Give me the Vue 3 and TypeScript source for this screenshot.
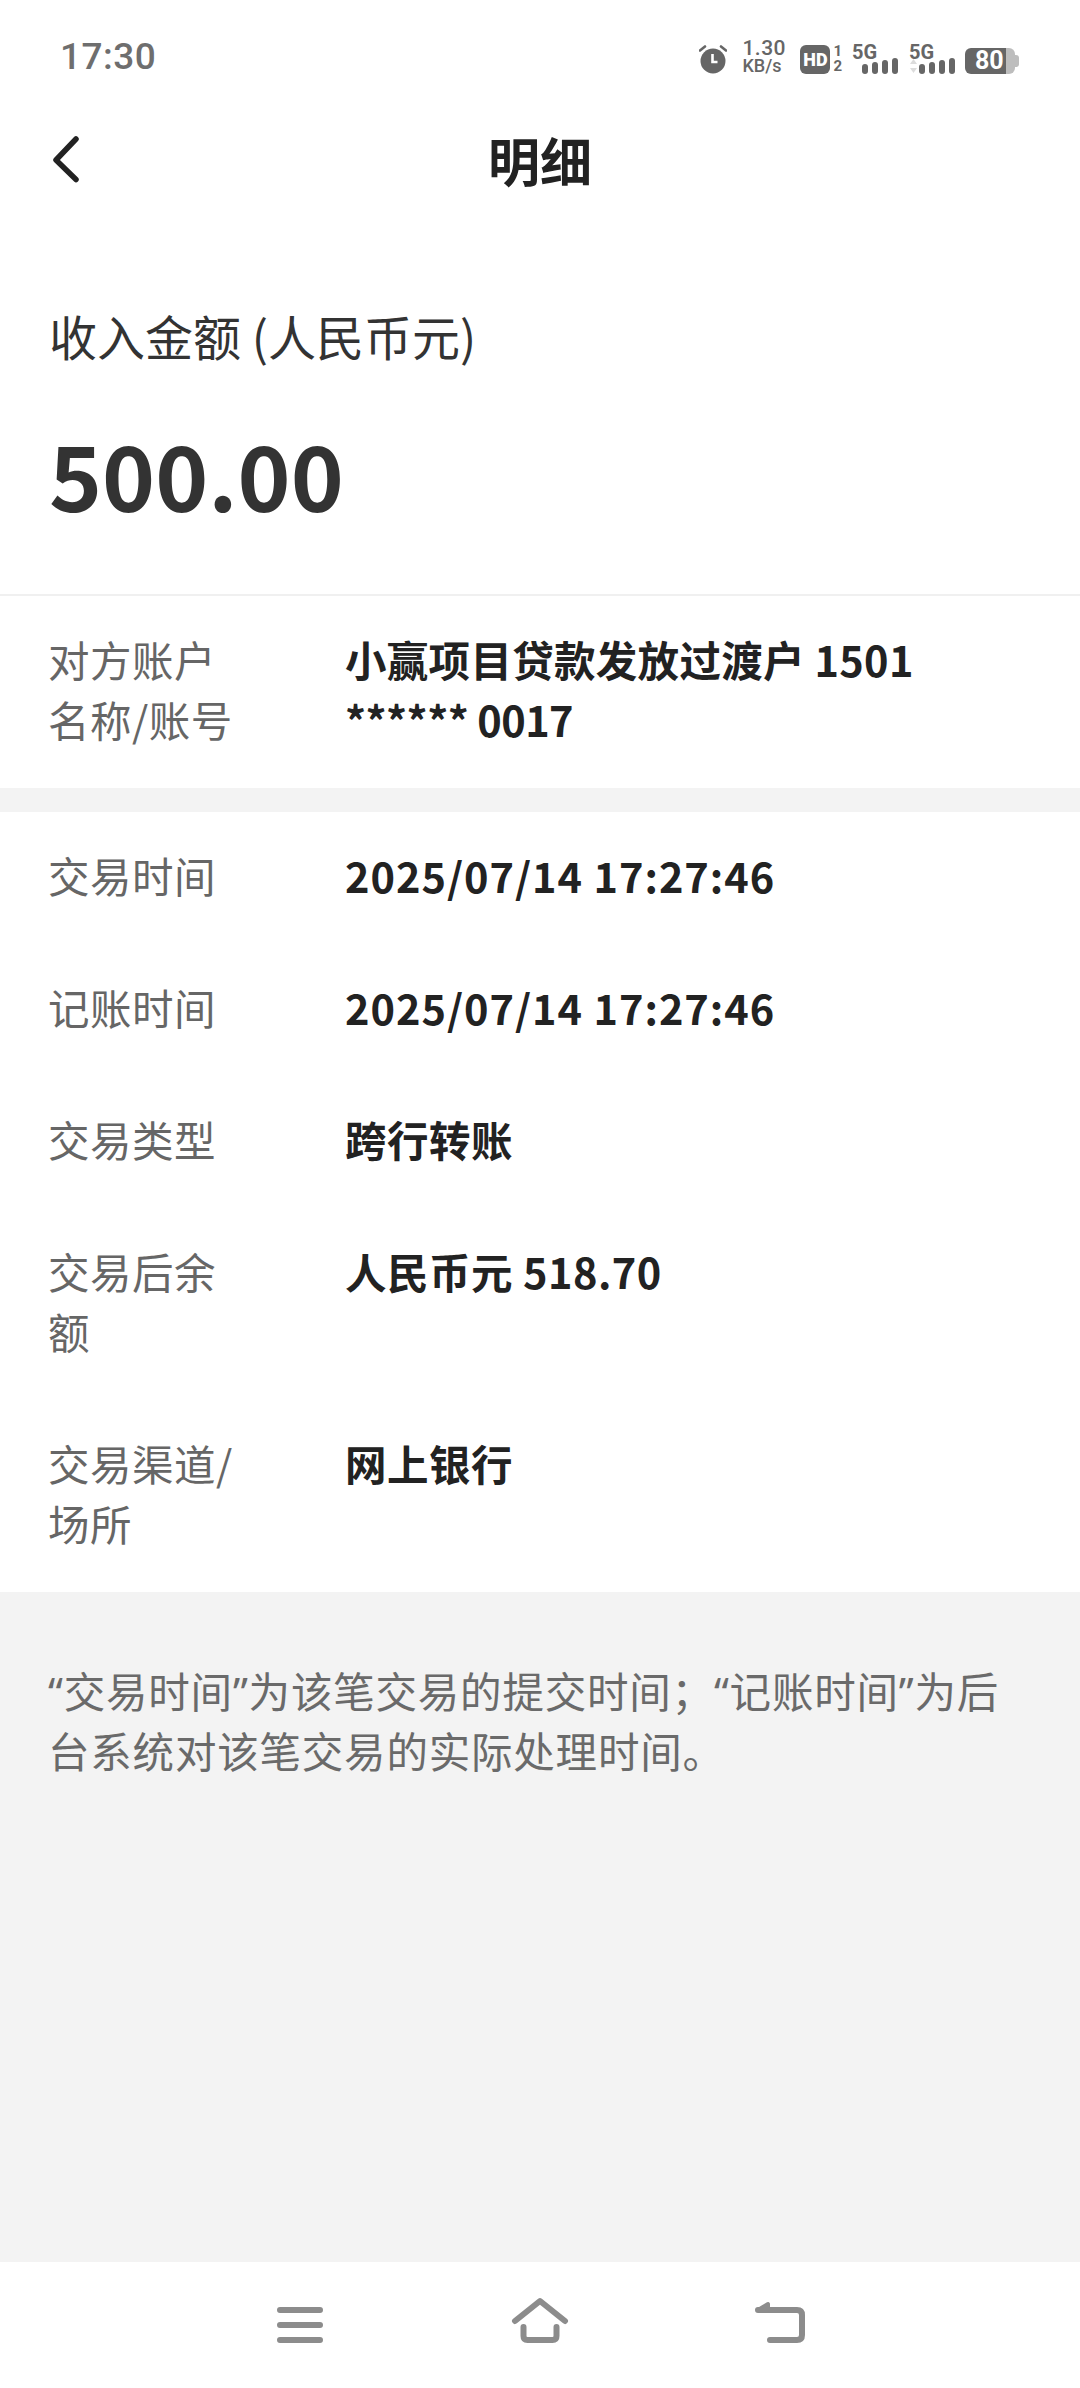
<script setup lang="ts">
const rows: { label: string; value: string; digits?: boolean }[] = [
  { label: '交易时间', value: '2025/07/14 17:27:46', digits: true },
  { label: '记账时间', value: '2025/07/14 17:27:46', digits: true },
  { label: '交易类型', value: '跨行转账' },
  { label: '交易后余额', value: '人民币元 518.70' },
  { label: '交易渠道/场所', value: '网上银行' },
]
const bars = [0, 1, 2, 3]
</script>

<template>
  <div class="page">
    <div class="status-bar">
      <span class="clock">17:30</span>
      <div class="status-icons">
        <svg class="ic-alarm" width="28" height="30" viewBox="0 0 28 30">
          <circle cx="14" cy="17" r="12.5" fill="#666" />
          <path d="M13.500 10v8h5" fill="none" stroke="#fff" stroke-width="2.600" />
          <path d="M1 6.500 6 2.500M27 6.500 22 2.500" stroke="#666" stroke-width="2.600" stroke-linecap="round" />
        </svg>
        <div class="speed">
          <span class="speed-num">1.30</span>
          <span class="speed-unit">KB/s</span>
        </div>
        <div class="hd">
          <span class="hd-box">HD</span>
          <span class="hd-sims"><span>1</span><span>2</span></span>
        </div>
        <div class="signal">
          <span class="net">5G</span>
          <div class="bars">
            <i v-for="b in bars" :key="b" :style="{ height: 10 + b * 2 + 'px' }"></i>
          </div>
        </div>
        <div class="signal signal-data">
          <span class="net">5G</span>
          <svg class="updown" width="7" height="15" viewBox="0 0 7 15">
            <path d="M3.500 0 7 5H0Z" fill="#dcdcdc" />
            <path d="M0 9h7l-3.500 5Z" fill="#dcdcdc" />
          </svg>
          <div class="bars">
            <i v-for="b in bars" :key="b" :style="{ height: 10 + b * 2 + 'px' }"></i>
          </div>
        </div>
        <div class="battery">
          <span class="battery-body">80</span>
          <i class="battery-nub"></i>
        </div>
      </div>
    </div>

    <header class="topbar">
      <svg class="back" width="30" height="50" viewBox="0 0 30 50">
        <path d="M23 4 3 25l20 19.500" fill="none" stroke="#222" stroke-width="5.500" stroke-linecap="round" stroke-linejoin="round" />
      </svg>
      <h1 class="title">明细</h1>
    </header>

    <section class="amount">
      <div class="amount-label">收入金额 (人民币元)</div>
      <div class="amount-num">500.00</div>
    </section>

    <section class="block block-account">
      <div class="row">
        <div class="row-label">对方账户<br />名称/账号</div>
        <div class="row-value row-account">小赢项目贷款发放过渡户 1501<br /><span class="masked">****** 0017</span></div>
      </div>
    </section>

    <section class="block">
      <div v-for="r in rows" :key="r.label" class="row">
        <div class="row-label">{{ r.label }}</div>
        <div class="row-value" :class="{ 'row-digits': r.digits }">{{ r.value }}</div>
      </div>
    </section>

    <div class="note">
      “交易时间”为该笔交易的提交时间；“记账时间”为后台系统对该笔交易的实际处理时间。
    </div>

    <nav class="navbar">
      <div class="nav-cell">
        <svg width="60" height="60" viewBox="0 0 60 60" fill="none" stroke="#8c8c8c" stroke-width="6" stroke-linecap="round">
          <path d="M10 15h40M10 30h40M10 45h40" />
        </svg>
      </div>
      <div class="nav-cell">
        <svg width="60" height="60" viewBox="0 0 60 60" fill="none" stroke="#8c8c8c" stroke-width="6" stroke-linecap="round" stroke-linejoin="round">
          <path d="M5 26 30 6l25 20" />
          <path d="M13.500 32v9q0 4 4 4h25q4 0 4-4v-9" />
        </svg>
      </div>
      <div class="nav-cell">
        <svg width="60" height="60" viewBox="0 0 60 60" fill="none" stroke="#8c8c8c" stroke-width="6" stroke-linecap="round" stroke-linejoin="round">
          <path d="M8 15h39q5 0 5 5v20q0 5-5 5H20" />
          <path d="M8 15 18 9v6Z" fill="#8c8c8c" stroke-width="4" />
        </svg>
      </div>
    </nav>
  </div>
</template>

<style>
html,
body {
  margin: 0;
  background: #fff;
}
</style>

<style scoped>
.page {
  width: 1080px;
  height: 2388px;
  display: flex;
  flex-direction: column;
  background: #fff;
  font-family: "Noto Sans CJK SC", "Noto Sans", sans-serif;
  color: #222;
}
.status-bar {
  height: 124px;
  box-sizing: border-box;
  padding: 34px 61px 0 60px;
  display: flex;
  justify-content: space-between;
  align-items: flex-start;
}
.clock {
  margin-top: 1px;
  font-family: Roboto, sans-serif;
  font-weight: 500;
  font-size: 37px;
  line-height: 44px;
  letter-spacing: 0.5px;
  color: #6e6e6e;
}
.status-icons {
  display: flex;
  align-items: flex-end;
  height: 40px;
  color: #666;
}
.speed {
  margin-left: 15px;
  display: flex;
  flex-direction: column;
  font-family: Roboto, sans-serif;
  font-weight: 500;
  width: 44px;
}
.speed-num {
  font-size: 21px;
  line-height: 19px;
  letter-spacing: 0.5px;
}
.speed-unit {
  font-size: 18px;
  line-height: 16px;
}
.hd {
  margin-left: 14px;
  display: flex;
  align-items: center;
  gap: 3px;
}
.hd-box {
  width: 30px;
  height: 29px;
  background: #666;
  border-radius: 6px;
  color: #fff;
  font-family: Roboto, sans-serif;
  font-weight: 900;
  font-size: 18px;
  line-height: 29px;
  text-align: center;
}
.hd-sims {
  display: flex;
  flex-direction: column;
  font-family: Roboto, sans-serif;
  font-weight: 700;
  font-size: 15px;
  line-height: 15px;
}
.signal {
  position: relative;
  margin-left: 10px;
  width: 46px;
  height: 29px;
  display: flex;
  align-items: flex-end;
  justify-content: flex-end;
}
.signal-data {
  margin-left: 11px;
}
.net {
  position: absolute;
  left: 0;
  top: -2px;
  font-family: Roboto, sans-serif;
  font-weight: 700;
  font-size: 20px;
  line-height: 18px;
}
.updown {
  position: absolute;
  left: 1px;
  bottom: 0;
}
.bars {
  display: flex;
  align-items: flex-end;
  gap: 4px;
}
.bars i {
  display: block;
  width: 6px;
  border-radius: 3px;
  background: #666;
}
.battery {
  margin-left: 10px;
  display: flex;
  align-items: center;
}
.battery-body {
  width: 50px;
  height: 26px;
  border-radius: 6px;
  background: linear-gradient(to right, #666 82%, #bdbdbd 82%);
  color: #fff;
  font-family: Roboto, sans-serif;
  font-weight: 700;
  font-size: 25px;
  line-height: 26px;
  padding-left: 10px;
  box-sizing: border-box;
}
.battery-nub {
  width: 4px;
  height: 12px;
  background: #bdbdbd;
  border-radius: 0 3px 3px 0;
}
.topbar {
  height: 72px;
  flex: none;
  position: relative;
  display: flex;
  align-items: center;
  justify-content: center;
}
.back {
  position: absolute;
  left: 53px;
  top: 11px;
}
.title {
  margin: 0;
  font-size: 52px;
  font-weight: 700;
  line-height: 72px;
}
.amount {
  height: 400px;
  box-sizing: border-box;
  padding: 106px 49px 0;
  border-bottom: 2px solid #f0f0f0;
  color: #333;
  flex: none;
}
.amount-label {
  font-size: 48px;
  line-height: 66px;
}
.amount-num {
  margin-top: 50px;
  font-size: 90px;
  font-weight: 700;
  line-height: 110px;
}
.block {
  flex: none;
}
.block-account {
  border-bottom: 24px solid #f3f3f3;
}
.row {
  display: grid;
  grid-template-columns: 190px 1fr;
  column-gap: 107px;
  padding: 33px 48px 39px;
  font-size: 41.500px;
  line-height: 60px;
  letter-spacing: 0.5px;
}
.row-label {
  color: #666;
}
.row-value {
  color: #222;
  font-weight: 700;
}
.row-digits {
  letter-spacing: 1px;
}
.row-account {
  letter-spacing: 0.300px;
}
.masked {
  letter-spacing: -0.500px;
}
.note {
  flex: 1;
  background: #f3f3f3;
  padding: 70px 50px 0 48px;
  font-family: "Noto Sans", "Noto Sans CJK SC", sans-serif;
  font-size: 41.500px;
  line-height: 60px;
  letter-spacing: 0.800px;
  color: #6a6a6a;
}
.navbar {
  flex: none;
  height: 126px;
  background: #fff;
  display: flex;
  justify-content: center;
  align-items: center;
}
.nav-cell {
  width: 240px;
  display: flex;
  justify-content: center;
}
.nav-cell svg {
  display: block;
}
</style>
